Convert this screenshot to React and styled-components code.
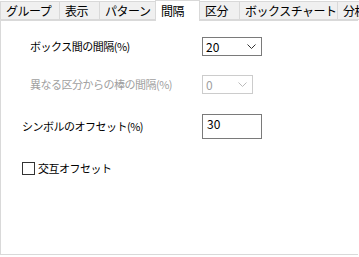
import React from 'react';
import styled, {createGlobalStyle} from "styled-components";

const GlobalStyle = createGlobalStyle`
  html, body {
    margin: 0;
    padding: 0;
    background: #fff;
  }
  body {
    font-family: "Noto Sans CJK JP", "Noto Sans", sans-serif;
    color: #000;
    width: 359px;
    height: 257px;
    overflow: hidden;
  }
`;

const Window = styled.div`
  width: 359px;
  height: 257px;
  display: flex;
  flex-direction: column;
  overflow: hidden;
`;

const TabBar = styled.div`
  display: flex;
  align-items: flex-end;
  height: 20px;
  position: relative;
  z-index: 1;
  white-space: nowrap;
`;

const Tab = styled.div`
  box-sizing: border-box;
  flex: 0 0 auto;
  width: ${p => p.$w}px;
  height: ${p => p.$active ? 21 : 19}px;
  margin-left: -1px;
  margin-bottom: ${p => p.$active ? -1 : 0}px;
  padding-left: ${p => p.$pad || 5}px;
  display: flex;
  align-items: center;
  font-size: 12px;
  letter-spacing: -0.5px;
  line-height: 1;
  background: ${p => p.$active ? "#fff" : "#f0f0f0"};
  border: 1px solid #d9d9d9;
  border-bottom: ${p => p.$active ? "none" : "1px solid #d9d9d9"};

  &:first-child {
    margin-left: 0;
  }
`;

const Panel = styled.div`
  box-sizing: border-box;
  width: 358px;
  height: 235px;
  border: 1px solid #d9d9d9;
  border-right: none;
  padding-top: 16px;
  display: flex;
  flex-direction: column;
`;

const Row = styled.div`
  display: flex;
  align-items: center;
  margin-top: ${p => p.$gap || 0}px;
`;

const Label = styled.div`
  box-sizing: border-box;
  width: 201px;
  padding-left: ${p => p.$indent}px;
  font-size: 11px;
  letter-spacing: -0.5px;
  line-height: 1;
  white-space: nowrap;
  color: ${p => p.$disabled ? "#a0a0a0" : "#000"};
`;

const Select = styled.div`
  box-sizing: border-box;
  width: ${p => p.$w}px;
  height: 19px;
  border: 1px solid ${p => p.$disabled ? "#cccccc" : "#7a7a7a"};
  display: flex;
  align-items: center;
  justify-content: space-between;
  padding: 0 5px 0 3px;
  font-size: 12px;
  color: ${p => p.$disabled ? "#a0a0a0" : "#000"};
  background: #fff;
`;

const TextBox = styled.div`
  box-sizing: border-box;
  width: 60px;
  height: 25px;
  border: 1px solid #7a7a7a;
  padding: 1px 4px;
  font-size: 12px;
  line-height: 16px;
  background: #fff;
`;

const CheckRow = styled.label`
  display: flex;
  align-items: center;
  padding-left: 21px;
  font-size: 11px;
  letter-spacing: -0.5px;
  line-height: 1;
`;

const Box = styled.span`
  box-sizing: border-box;
  width: 13px;
  height: 13px;
  border: 1px solid #333;
  background: #fff;
  margin-right: 3px;
`;

const Chevron = ({color}) => (
  <svg width="9" height="5" viewBox="0 0 9 5">
    <path d="M0.5 0.5 L4.5 4.5 L8.5 0.5" fill="none" stroke={color} strokeWidth="1"/>
  </svg>
);

const tabs = [
  {label: "グループ", w: 60},
  {label: "表示", w: 41},
  {label: "パターン", w: 57},
  {label: "間隔", w: 45, active: true},
  {label: "区分", w: 41},
  {label: "ボックスチャート", w: 99},
  {label: "分析", w: 30},
];

const App = () => {
  return (
    <Window>
      <GlobalStyle/>
      <TabBar>
        {tabs.map(t => (
          <Tab key={t.label} $w={t.w} $active={t.active}>{t.label}</Tab>
        ))}
      </TabBar>
      <Panel>
        <Row>
          <Label $indent={29}>ボックス間の間隔(%)</Label>
          <Select $w={60}>20<Chevron color="#333"/></Select>
        </Row>
        <Row $gap={19}>
          <Label $indent={29} $disabled>異なる区分からの棒の間隔(%)</Label>
          <Select $w={51} $disabled>0<Chevron color="#bbb"/></Select>
        </Row>
        <Row $gap={20}>
          <Label $indent={21}>シンボルのオフセット(%)</Label>
          <TextBox>30</TextBox>
        </Row>
        <Row $gap={23}>
          <CheckRow><Box/>交互オフセット</CheckRow>
        </Row>
      </Panel>
    </Window>
  );
};

export default App;
